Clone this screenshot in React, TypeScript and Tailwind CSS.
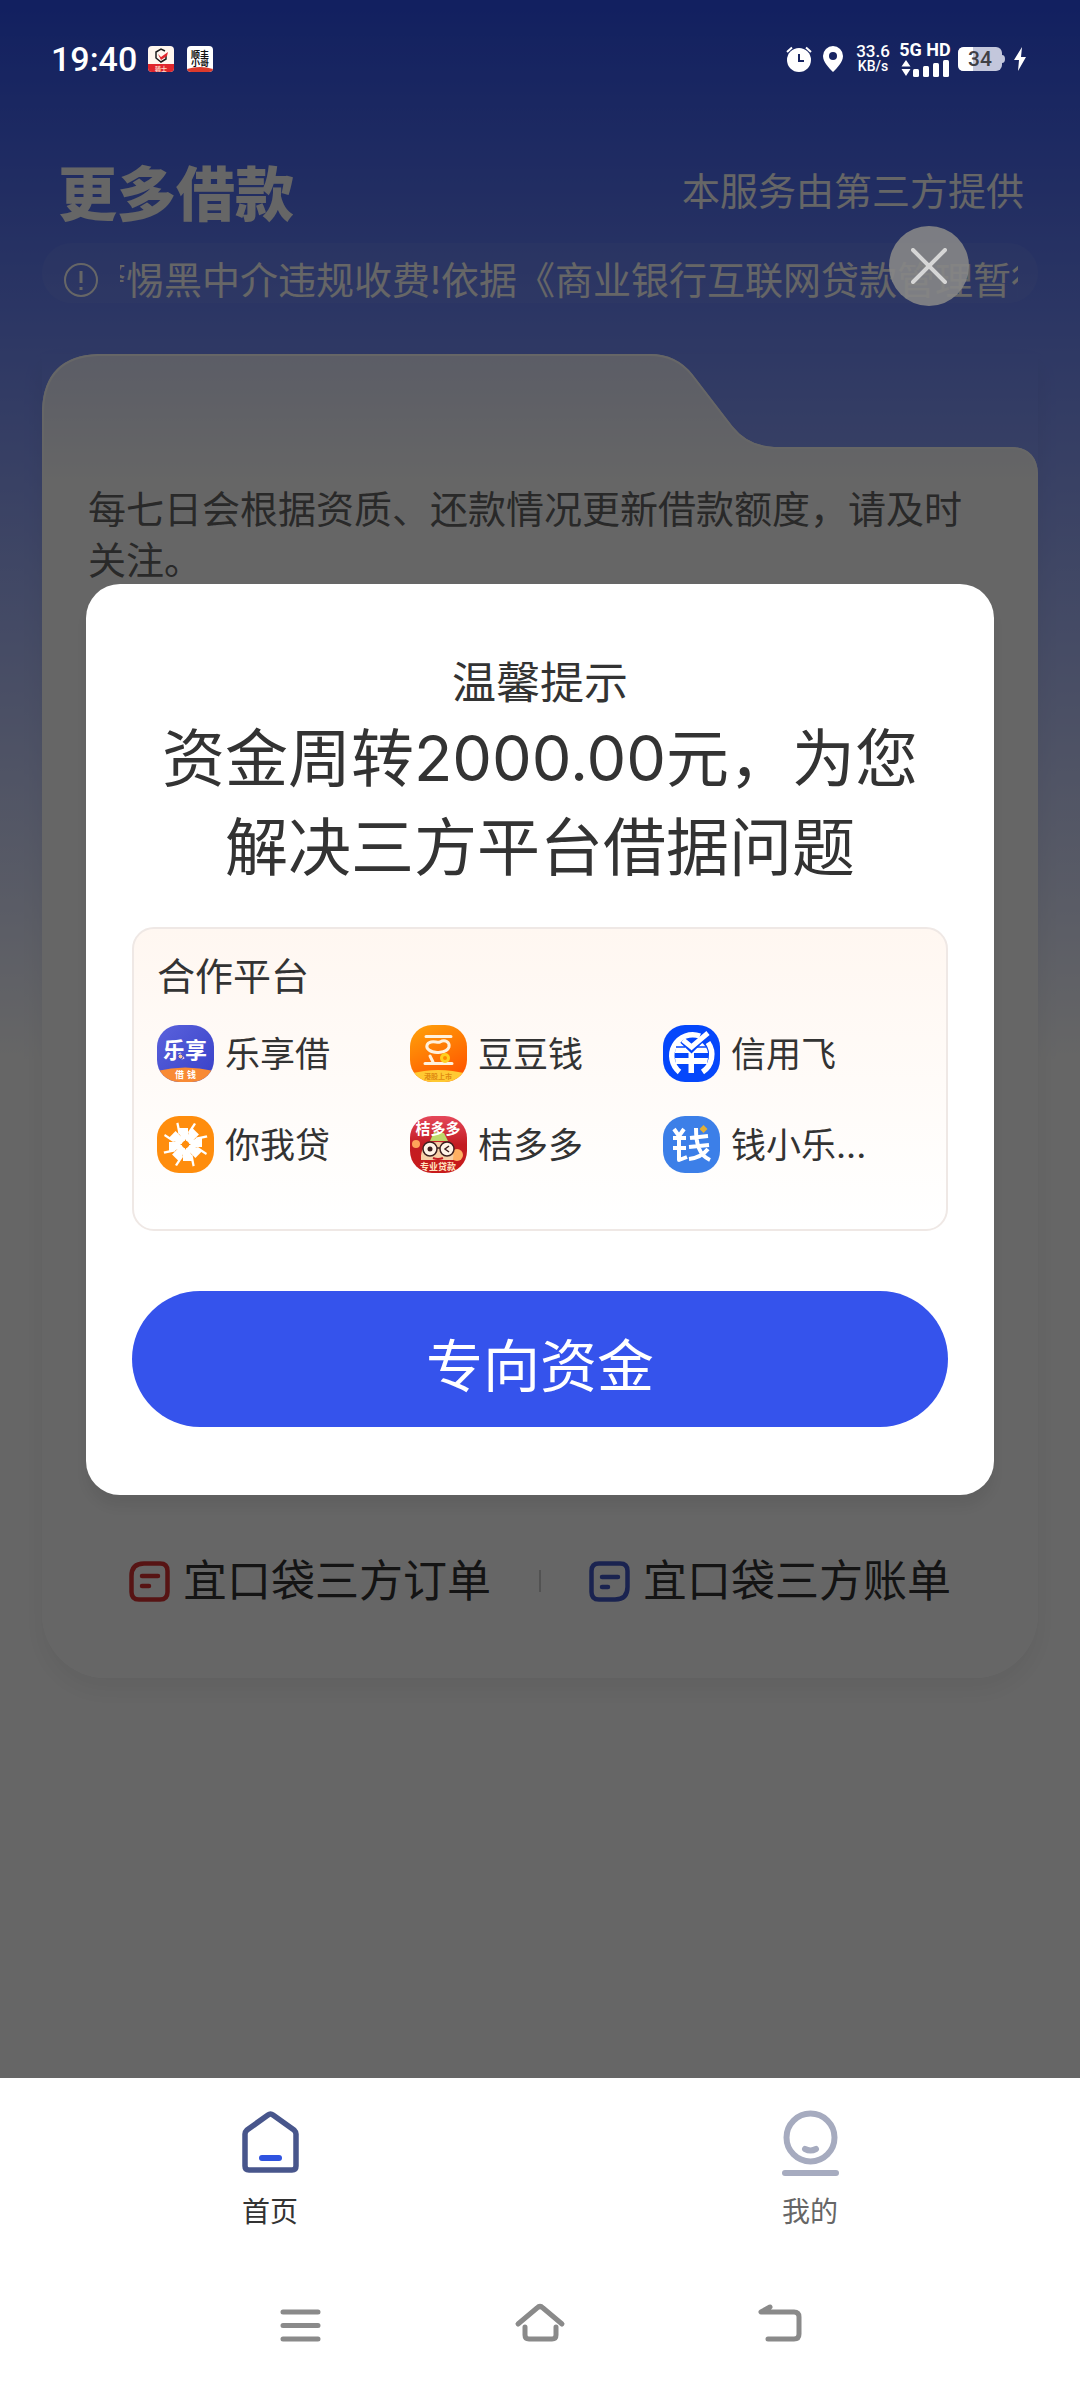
import React, { useState } from "react";

type Platform = {
  name: string;
  icon: React.ReactNode;
};

const Logo = ({ children }: { children: React.ReactNode }) => (
  <svg viewBox="0 0 57 57" className="size-[57px] shrink-0 rounded-[22px]" aria-hidden="true">
    {children}
  </svg>
);

const LexiangLogo = () => (
  <Logo>
    <defs>
      <linearGradient id="lexiang" x1="0" y1="0" x2="1" y2="1">
        <stop offset="0" stopColor="#5a62dc" />
        <stop offset="1" stopColor="#3840c8" />
      </linearGradient>
    </defs>
    <rect width="57" height="57" fill="url(#lexiang)" />
    <path d="M0 46Q28 39 57 46V57H0Z" fill="#f88a35" />
    <text x="28" y="33" textAnchor="middle" fontSize="22" fontWeight="700" fill="#fff">
      乐享
    </text>
    <circle cx="23.500" cy="31.500" r="2.500" fill="#f9c9a0" stroke="#3840c8" />
    <text x="18" y="53" fontSize="9" fontWeight="700" fill="#fff">
      借
    </text>
    <text x="30" y="53" fontSize="9" fontWeight="700" fill="#fff">
      钱
    </text>
  </Logo>
);

const DoudouLogo = () => (
  <Logo>
    <defs>
      <linearGradient id="doudou" x1="0" y1="0" x2="0.500" y2="1">
        <stop offset="0" stopColor="#ffa30a" />
        <stop offset="1" stopColor="#ff5a00" />
      </linearGradient>
    </defs>
    <rect width="57" height="57" fill="url(#doudou)" />
    <path d="M0 49Q28 41 57 49V57H0Z" fill="#ffc933" />
    <g fill="none" stroke="#fff1dc" strokeWidth="3" strokeLinecap="round" strokeLinejoin="round">
      <path d="M16 11.500H41M15 38.500H42M20 31L23 37" />
      <path d="M21 17C25 16 27 18 30 17C35 14 40 17 39 22C37 28 24 29 19 25C15 22 17 18 21 17Z" />
    </g>
    <circle cx="35" cy="33" r="3.500" fill="#ff8a00" stroke="#ffcf1f" strokeWidth="3" />
    <text x="28" y="54" textAnchor="middle" fontSize="7" fontWeight="700" fill="#e08a10">
      港股上市
    </text>
  </Logo>
);

const XinyongLogo = () => (
  <Logo>
    <rect width="57" height="57" fill="#0547fb" />
    {/* outer ring, open at the bottom and where the tick leaves it */}
    <path d="M16.500 47A21 21 0 0 1 37 11" fill="none" stroke="#fff" strokeWidth="5.500" />
    <path d="M45 17.500A21 21 0 0 1 39.500 47" fill="none" stroke="#fff" strokeWidth="5.500" />
    <path d="M12 28A16.500 16.500 0 0 1 18 15L28 26L38 17A16.500 16.500 0 0 1 45 28Z" fill="#fff" />
    <path d="M12 33H45L44 39H13ZM25.500 28H31V48H25.500Z" fill="#fff" />
    <path d="M13 22H22M34 22H43" stroke="#0547fb" strokeWidth="1.500" />
    <path d="M18 17L28.500 27L44 12" fill="none" stroke="#0547fb" strokeWidth="2" />
    <path d="M20 15L28.500 22L45 8" fill="none" stroke="#fff" strokeWidth="5" />
  </Logo>
);

const blades = [0, 45, 90, 135, 180, 225, 270, 315];

const NiwoLogo = () => (
  <Logo>
    <rect width="57" height="57" fill="#ff8d0d" />
    {blades.map(angle => (
      <g key={angle} transform={`rotate(${angle} 28.500 28.500)`} fill="#fff">
        <path d="M25 25L21 12L31 12L31 25Z" />
        <path d="M31 16L37 7L39 8L32 19Z" />
      </g>
    ))}
    <path d="M28.500 23L30 27L34 28.500L30 30L28.500 34L27 30L23 28.500L27 27Z" fill="#ff8d0d" />
    <circle cx="28.500" cy="28.500" r="3" fill="#ff8d0d" />
  </Logo>
);

const JieduoLogo = () => (
  <Logo>
    <defs>
      <linearGradient id="jieduo" x1="0" y1="0" x2="0" y2="1">
        <stop offset="0" stopColor="#e5475a" />
        <stop offset="0.500" stopColor="#c31c22" />
        <stop offset="1" stopColor="#c81a1a" />
      </linearGradient>
    </defs>
    <rect width="57" height="57" fill="url(#jieduo)" />
    <circle cx="6" cy="28" r="4" fill="#ffa35a" />
    <circle cx="47" cy="39" r="6" fill="#ffb062" />
    <path d="M11 44C10 31 17 26 28 26S45 32 43 44Z" fill="#f6cfa6" />
    <path d="M20 25L24 16L34 17L38 25Z" fill="#bcd76a" />
    <g fill="#fff3e6" stroke="#3d2020" strokeWidth="1.500">
      <circle cx="20" cy="33" r="7" />
      <circle cx="37" cy="33" r="7" />
      <path d="M27 32H30M39 30L35 33L39 36" fill="none" />
    </g>
    <circle cx="20" cy="33" r="2.500" fill="#3d2020" />
    <path d="M23 42Q28 44 33 42" stroke="#c31c22" strokeWidth="2" fill="none" />
    <text x="28" y="18" textAnchor="middle" fontSize="15" fontWeight="700" fill="#fff">
      桔多多
    </text>
    <text x="28" y="54" textAnchor="middle" fontSize="9" fontWeight="700" fill="#ffe3c0">
      专业贷款
    </text>
  </Logo>
);

const QianLogo = () => (
  <Logo>
    <rect width="57" height="57" fill="#3c7fe8" />
    <g fill="none" stroke="#fff" strokeWidth="4" strokeLinejoin="round">
      <path d="M11 13L16 20L21 13M10 22H23M10 32H23M16 20V44L24 41" />
      <path d="M27 22L45 20M26 31L46 29M33 12C33 28 36 39 47 44M26 43C35 42 41 38 45 33" />
    </g>
    <path d="M40.500 9L44.500 13L40.500 17L36.500 13Z" fill="#e2ae35" />
  </Logo>
);

const platforms: Platform[] = [
  { name: "乐享借", icon: <LexiangLogo /> },
  { name: "豆豆钱", icon: <DoudouLogo /> },
  { name: "信用飞", icon: <XinyongLogo /> },
  { name: "你我贷", icon: <NiwoLogo /> },
  { name: "桔多多", icon: <JieduoLogo /> },
  { name: "钱小乐...", icon: <QianLogo /> },
];

const StatusBar = () => (
  <div className="relative z-20 flex h-[118px] items-center justify-between pr-[54px] pl-[51px] font-['Roboto','Noto_Sans_CJK_SC',sans-serif] text-white">
    <div className="flex items-center">
      <span className="text-[34px] leading-10 font-medium">19:40</span>
      <svg viewBox="0 0 26 26" className="ml-[11px] size-[26px] rounded" aria-hidden="true">
        <rect width="26" height="26" fill="#fff6ee" />
        <path d="M0 18H26V26H0Z" fill="#e0262c" />
        <path d="M17 5L13 3L8 6V12L13 16L18 13V10" fill="none" stroke="#1d1d1d" strokeWidth="1.500" />
        <path d="M10 8L13 11L20 6L19 10L13 14Z" fill="#e0262c" />
        <text x="13" y="25" textAnchor="middle" fontSize="6" fontWeight="700" fill="#ffd9c8">
          骑士
        </text>
      </svg>
      <svg viewBox="0 0 26 26" className="ml-[13px] size-[26px] rounded" aria-hidden="true">
        <rect width="26" height="26" fill="#fff" />
        <path d="M0 23Q13 19 26 23V26H0Z" fill="#dc3a2c" />
        <text x="13" y="12" textAnchor="middle" fontSize="9" fontWeight="700" fill="#111">
          顺丰
        </text>
        <text x="13" y="20" textAnchor="middle" fontSize="9" fontWeight="700" fill="#111">
          小哥
        </text>
      </svg>
    </div>
    <div className="flex items-center">
      <svg viewBox="0 0 26 26" className="size-[26px]" aria-hidden="true">
        <circle cx="13" cy="14" r="12" fill="#fff" />
        <path d="M1 6L6 1.500M25 6L20 1.500" stroke="#fff" strokeWidth="2" />
        <path d="M13 8V15H18" fill="none" stroke="#172462" strokeWidth="2" />
      </svg>
      <svg viewBox="0 0 20 26" className="ml-[11px] h-[26px] w-5" aria-hidden="true">
        <path d="M10 0A10 10 0 0 1 20 10C20 16 14 22 10 26C6 22 0 16 0 10A10 10 0 0 1 10 0Z" fill="#fff" />
        <circle cx="10" cy="10" r="4" fill="#172462" />
      </svg>
      <div className="ml-[14px] flex w-8 flex-col items-center font-medium">
        <span className="text-[17px] leading-[14px]">33.6</span>
        <span className="text-[14px] leading-4">KB/s</span>
      </div>
      <div className="ml-3 flex w-12 flex-col items-center gap-[2px]">
        <span className="text-[18px] leading-4 font-bold whitespace-nowrap">5G HD</span>
        <svg viewBox="0 0 48 17" className="h-[17px] w-12" fill="#fff" aria-hidden="true">
          <path d="M5 0L9.500 6.500H0.500ZM5 16L9.500 9H0.500Z" />
          <rect x="12" y="9" width="6" height="8" rx="1.500" />
          <rect x="22" y="6" width="6" height="11" rx="1.500" />
          <rect x="32" y="3" width="6" height="14" rx="1.500" />
          <rect x="42" y="0" width="6" height="17" rx="1.500" />
        </svg>
      </div>
      <svg viewBox="0 0 47 24" className="ml-[9px] h-6 w-[47px]" aria-hidden="true">
        <path d="M44 8Q47 8 47 12T44 16Z" fill="#c3c7dc" />
        <rect width="44" height="24" rx="6" fill="#c3c7dc" />
        <path d="M6 0H15V24H6Q0 24 0 18V6Q0 0 6 0Z" fill="#fff" />
        <text x="22" y="19" textAnchor="middle" fontSize="21" fontWeight="500" fill="#3f4045">
          34
        </text>
      </svg>
      <svg viewBox="0 0 12 24" className="ml-[9px] h-6 w-3" aria-hidden="true">
        <path d="M8 0L0 13H5L4 24L12 10H7Z" fill="#fff" />
      </svg>
    </div>
  </div>
);

const App = () => {
  const [showDialog, setShowDialog] = useState(true);

  return (
    <div className="flex min-h-screen flex-col bg-white font-['Inter','Noto_Sans_CJK_SC',sans-serif] text-[#333]">
      <main className="relative flex-1 bg-[linear-gradient(to_bottom,#2d50f0_0px,#738cfa_340px,#ffffff_1060px)]">
        <StatusBar />

        <header className="flex items-start justify-between px-14 pt-12 text-white">
          <h1 className="ml-[2px] text-[59px] leading-[58px] font-black">更多借款</h1>
          <p className="text-[38px] leading-[50px]">本服务由第三方提供</p>
        </header>

        <div className="mx-[42px] mt-[19px] flex h-[60px] items-center rounded-full bg-white/5 pt-[14px] pr-5 pl-[22px] text-white">
          <svg viewBox="0 0 34 34" className="size-[34px] shrink-0" fill="none" stroke="#fff" strokeWidth="2" aria-hidden="true">
            <circle cx="17" cy="17" r="16" />
            <path d="M17 8V20M17 24V27" strokeWidth="3" />
          </svg>
          {/* scrolling notice */}
          <div className="ml-[22px] flex-1 overflow-hidden">
            <p className="-ml-8 text-[38px] leading-[44px] whitespace-nowrap">
              警惕黑中介违规收费!依据《商业银行互联网贷款管理暂行
            </p>
          </div>
        </div>

        <section className="mx-[42px] mt-[51px] rounded-b-[64px] shadow-[0_12px_24px_rgba(0,0,0,0.06)]">
          {/* folder tab */}
          <svg viewBox="0 0 996 130" className="block w-full" aria-hidden="true">
            <defs>
              <linearGradient id="folder" x1="0" y1="0" x2="0" y2="1">
                <stop offset="0" stopColor="#e4e8ff" />
                <stop offset="1" stopColor="#ffffff" />
              </linearGradient>
            </defs>
            <path
              d="M0 130V56Q2 2 56 0H608Q634 0 650 20L690 72Q706 92 732 93H970Q995 94 996 120V130Z"
              fill="url(#folder)"
            />
            <path
              d="M1 130V56Q3 3 56 1H608Q634 1 650 21L690 73Q706 93 732 94H970Q994 95 995 120V130"
              fill="none"
              stroke="#ffffff"
              strokeWidth="2"
            />
          </svg>
          <div className="flex min-h-[1194px] flex-col justify-between rounded-b-[64px] bg-white pb-[69px]">
            <p className="px-[46px] text-[38px] leading-[51px] text-[#666]">
              每七日会根据资质、还款情况更新借款额度，请及时关注。
            </p>
            <div className="flex items-center justify-between px-[87px] text-[44px] leading-[56px] text-[#333]">
              <a href="#orders" className="flex items-center gap-[13px]">
                <svg viewBox="0 0 41 41" className="size-[41px]" fill="none" stroke="#d93434" strokeWidth="4.500" strokeLinecap="round" aria-hidden="true">
                  <path d="M15 2.500H31Q38.500 2.500 38.500 10V31Q38.500 38.500 31 38.500H10Q2.500 38.500 2.500 31V15Q2.500 2.500 15 2.500Z" />
                  <path d="M13 15H29M13 25H20" />
                </svg>
                宜口袋三方订单
              </a>
              <span className="h-[22px] w-[2px] bg-[#ccc]" />
              <a href="#bills" className="flex items-center gap-[13px]">
                <svg viewBox="0 0 41 41" className="size-[41px]" fill="none" stroke="#4359c8" strokeWidth="4.500" strokeLinecap="round" aria-hidden="true">
                  <path d="M10 2.500H31Q38.500 2.500 38.500 10V26Q38.500 38.500 26 38.500H10Q2.500 38.500 2.500 31V10Q2.500 2.500 10 2.500Z" />
                  <path d="M13 16H29M13 26H19" />
                </svg>
                宜口袋三方账单
              </a>
            </div>
          </div>
        </section>

        {showDialog && (
          <div className="absolute inset-0 z-10 flex flex-col bg-black/60 px-[86px] pt-[226px]">
            <button
              type="button"
              aria-label="关闭"
              className="mr-[25px] flex size-20 items-center justify-center self-end rounded-full bg-[#868686]/90"
              onClick={() => setShowDialog(false)}
            >
              <svg viewBox="0 0 36 36" className="size-9" stroke="#d6d6d6" strokeWidth="4" strokeLinecap="round" aria-hidden="true">
                <path d="M2 2L34 34M34 2L2 34" />
              </svg>
            </button>

            <div
              role="dialog"
              aria-labelledby="dialog-title"
              className="mt-[278px] rounded-[34px] bg-white px-[46px] py-[68px] text-center shadow-[0_12px_12px_rgba(0,0,0,0.06)]"
            >
              <h2 id="dialog-title" className="text-[44px] leading-[62px]">
                温馨提示
              </h2>
              <p className="text-[63px] leading-[89px]">
                资金周转2000.00元，为您
                <br />
                解决三方平台借据问题
              </p>

              <div className="mt-[35px] min-h-[304px] rounded-[22px] border-2 border-[#efe8e5] bg-linear-to-b from-[#fff7f1] via-[#fffbf8] to-white pt-5 pr-[30px] pl-[23px] text-left">
                <h3 className="text-[38px] leading-[54px]">合作平台</h3>
                <ul className="mt-[22px] grid grid-cols-3 gap-y-[34px]">
                  {platforms.map(platform => (
                    <li key={platform.name} className="flex items-center gap-[11px]">
                      {platform.icon}
                      <span className="text-[35px] leading-[50px] whitespace-nowrap">{platform.name}</span>
                    </li>
                  ))}
                </ul>
              </div>

              <button
                type="button"
                className="mt-[60px] h-[136px] w-full rounded-full bg-[#3553ec] pt-4 text-[57px] leading-[80px] text-white"
              >
                专向资金
              </button>
            </div>
          </div>
        )}
      </main>

      <footer className="bg-white">
        <nav className="flex pt-8 text-[28px] leading-10">
          <a href="#home" className="flex flex-1 flex-col items-center gap-4">
            <svg viewBox="0 0 57 66" className="h-[66px] w-[57px]" fill="none" strokeLinecap="round" strokeLinejoin="round" aria-hidden="true">
              <path
                d="M3 24Q3 22 5 20L26 5Q28.500 3 31 5L52 20Q54 22 54 24V56Q54 60 50 60H7Q3 60 3 56Z"
                stroke="#48568c"
                strokeWidth="5.500"
              />
              <path d="M20 48H37" stroke="#2f53e0" strokeWidth="6" />
            </svg>
            首页
          </a>
          <a href="#mine" className="flex flex-1 flex-col items-center gap-4 text-[#666]">
            <svg viewBox="0 0 57 66" className="h-[66px] w-[57px]" fill="none" stroke="#a6abbf" strokeLinecap="round" aria-hidden="true">
              <circle cx="28.500" cy="27.500" r="24" strokeWidth="6" />
              <path d="M23 39Q28.500 42 34 39" strokeWidth="6" />
              <path d="M3 63H54" strokeWidth="6" />
            </svg>
            我的
          </a>
        </nav>
        <div className="flex justify-center gap-[180px] pt-16 pb-8">
          <button type="button" aria-label="最近任务" className="flex w-[60px] justify-center">
            <svg viewBox="0 0 60 60" className="size-[60px]" stroke="#8a8a8a" strokeWidth="5" strokeLinecap="round" aria-hidden="true">
              <path d="M13 16H48M13 29.500H48M13 43H48" />
            </svg>
          </button>
          <button type="button" aria-label="主屏幕" className="flex w-[60px] justify-center">
            <svg viewBox="0 0 60 60" className="size-[60px]" fill="none" stroke="#8a8a8a" strokeWidth="5" strokeLinecap="round" strokeLinejoin="round" aria-hidden="true">
              <path d="M8 28L27 12Q30 9 33 12L52 28M15 31V39Q15 43 19 43H42Q46 43 46 39V31" />
            </svg>
          </button>
          <button type="button" aria-label="返回" className="flex w-[60px] justify-center">
            <svg viewBox="0 0 60 60" className="size-[60px]" fill="none" stroke="#8a8a8a" strokeWidth="5" strokeLinecap="round" strokeLinejoin="round" aria-hidden="true">
              <path d="M20 11L11 16H44Q49 16 49 21V38Q49 43 44 43H18" />
            </svg>
          </button>
        </div>
      </footer>
    </div>
  );
};

export default App;
